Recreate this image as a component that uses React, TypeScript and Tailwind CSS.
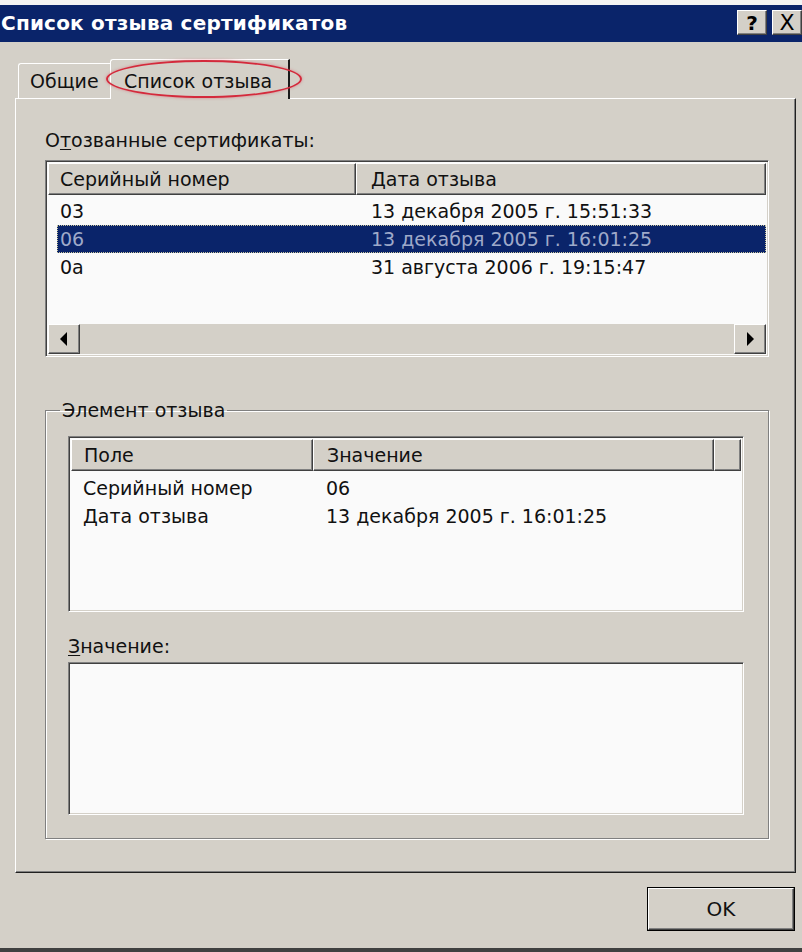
import React from "react";

const raised =
  "border border-t-white border-l-white border-r-[#404040] border-b-[#404040] shadow-[inset_-1px_-1px_0_#808080]";

function TitleBtn({ children }: { children: React.ReactNode }) {
  return (
    <div
      className={`w-[30px] h-[25px] bg-[#d4d0c8] ${raised} flex items-center justify-center text-black font-bold text-[20px] leading-none`}
    >
      {children}
    </div>
  );
}

function HeaderCell({ children, className = "" }: { children?: React.ReactNode; className?: string }) {
  return (
    <div className={`h-full bg-[#d4d0c8] ${raised} flex items-center ${className}`}>{children}</div>
  );
}

function Sunken({ className = "", children }: { className?: string; children?: React.ReactNode }) {
  return (
    <div
      className={`border border-t-[#808080] border-l-[#808080] border-r-white border-b-white shadow-[inset_1px_1px_0_#404040,inset_-1px_-1px_0_#d4d0c8] bg-[#fafafa] ${className}`}
    >
      {children}
    </div>
  );
}

function Arrow({ dir }: { dir: "left" | "right" }) {
  return (
    <svg width="10" height="14" viewBox="0 0 10 14">
      {dir === "left" ? <polygon points="8,0 8,14 1,7" fill="#000" /> : <polygon points="2,0 2,14 9,7" fill="#000" />}
    </svg>
  );
}

export default function App() {
  const rows = [
    ["03", "13 декабря 2005 г. 15:51:33"],
    ["06", "13 декабря 2005 г. 16:01:25"],
    ["0a", "31 августа 2006 г. 19:15:47"],
  ];
  return (
    <div className="w-[802px] h-[952px] bg-[#d4d0c8] flex flex-col font-['DejaVu_Sans',sans-serif] text-[19px] text-[#111] overflow-hidden">
      <div className="h-[5px] bg-[#f4f4f4]" />
      {/* Title bar */}
      <div className="h-[37px] bg-[#0a246a] flex items-start justify-between">
        <span className="text-white font-bold text-[20px] leading-[37px] pl-[1px] tracking-[0.2px]">
          Список отзыва сертификатов
        </span>
        <div className="flex gap-[5px] mt-[5px]">
          <TitleBtn>?</TitleBtn>
          <TitleBtn>
            <span className="font-normal text-[22px]">X</span>
          </TitleBtn>
        </div>
      </div>

      {/* Tabs */}
      <div className="pl-[15px] pr-[6px] pt-[17px] flex flex-col">
        <div className="flex items-end h-[40px] relative z-10 -mb-[1px]">
          <div className="ml-[3px] w-[92px] h-[35px] border-t border-l border-white rounded-tl-[3px] flex items-center pl-[11px] mb-[1px]">
            Общие
          </div>
          <div className="relative w-[180px] h-[40px] bg-[#d4d0c8] border-t border-l border-white border-r-2 border-r-[#1a1a1a] rounded-tl-[3px] flex items-start pt-[7px] pl-[13px]">
            Список отзыва
            <div className="absolute left-[-5px] top-[0px] w-[196px] h-[38px] rounded-[50%] border-[2.5px] border-[#d42a3c] shadow-[0_0_3px_rgba(220,60,80,0.5)]" />
          </div>
        </div>

        {/* Panel */}
        <div className="h-[775px] border-t border-l border-white border-r border-b border-r-[#202020] border-b-[#202020] shadow-[inset_-1px_-1px_0_#808080] flex flex-col pl-[29px] pr-[26px]">
          <div className="mt-[30px] h-[22px] leading-[22px]">
            О<span className="underline underline-offset-2">т</span>озванные сертификаты:
          </div>
          <Sunken className="mt-[9px] h-[197px] flex flex-col p-[2px]">
            <div className="h-[32px] flex shrink-0">
              <HeaderCell className="w-[308px] pl-[11px]">Серийный номер</HeaderCell>
              <HeaderCell className="flex-1 pl-[14px]">Дата отзыва</HeaderCell>
            </div>
            <div className="flex-1 flex flex-col pt-[2px] pl-[9px] bg-[#fafafa]">
              {rows.map((r, i) => (
                <div
                  key={i}
                  className={`h-[28px] flex items-center ${
                    i === 1 ? "bg-[#0a246a] text-[#9ea9c9] border border-dotted border-[#c9c59a]" : "border border-transparent"
                  }`}
                >
                  <span className="w-[313px] pl-[2px]">{r[0]}</span>
                  <span>{r[1]}</span>
                </div>
              ))}
            </div>
            <div className="h-[30px] flex shrink-0 bg-[#d4d0c8]">
              <div className={`w-[32px] h-full bg-[#d4d0c8] ${raised} flex items-center justify-center`}>
                <Arrow dir="left" />
              </div>
              <div className="flex-1" />
              <div className={`w-[32px] h-full bg-[#d4d0c8] ${raised} flex items-center justify-center`}>
                <Arrow dir="right" />
              </div>
            </div>
          </Sunken>

          {/* Group box */}
          <fieldset className="mt-[42px] h-[440px] border border-[#808080] shadow-[inset_1px_1px_0_#fff,1px_1px_0_#fff] px-[22px]">
            <legend className="-ml-[8px] px-[2px] h-[22px] leading-[22px]">Элемент отзыва</legend>
            <Sunken className="mt-[15px] h-[176px] flex flex-col p-[2px] mr-[2px]">
              <div className="h-[32px] flex shrink-0">
                <HeaderCell className="w-[242px] pl-[12px]">Поле</HeaderCell>
                <HeaderCell className="w-[401px] pl-[13px]">Значение</HeaderCell>
                <HeaderCell className="flex-1" />
              </div>
              <div className="flex-1 flex flex-col pt-[3px] pl-[12px]">
                <div className="h-[28px] flex items-center">
                  <span className="w-[243px]">Серийный номер</span>
                  <span>06</span>
                </div>
                <div className="h-[28px] flex items-center">
                  <span className="w-[243px]">Дата отзыва</span>
                  <span>13 декабря 2005 г. 16:01:25</span>
                </div>
              </div>
            </Sunken>
            <div className="mt-[23px] h-[22px] leading-[22px]">
              <span className="underline underline-offset-2">З</span>начение:
            </div>
            <Sunken className="mt-[5px] h-[153px] mr-[2px]" />
          </fieldset>
        </div>
      </div>

      {/* Bottom */}
      <div className="flex justify-end pr-[7px] mt-[14px]">
        <div className="w-[148px] h-[44px] border border-black bg-[#d4d0c8]">
          <div className={`w-full h-full ${raised} flex items-center justify-center text-[20px]`}>OK</div>
        </div>
      </div>
      <div className="flex-1" />
      <div className="h-[4px] bg-[#404040]" />
    </div>
  );
}
